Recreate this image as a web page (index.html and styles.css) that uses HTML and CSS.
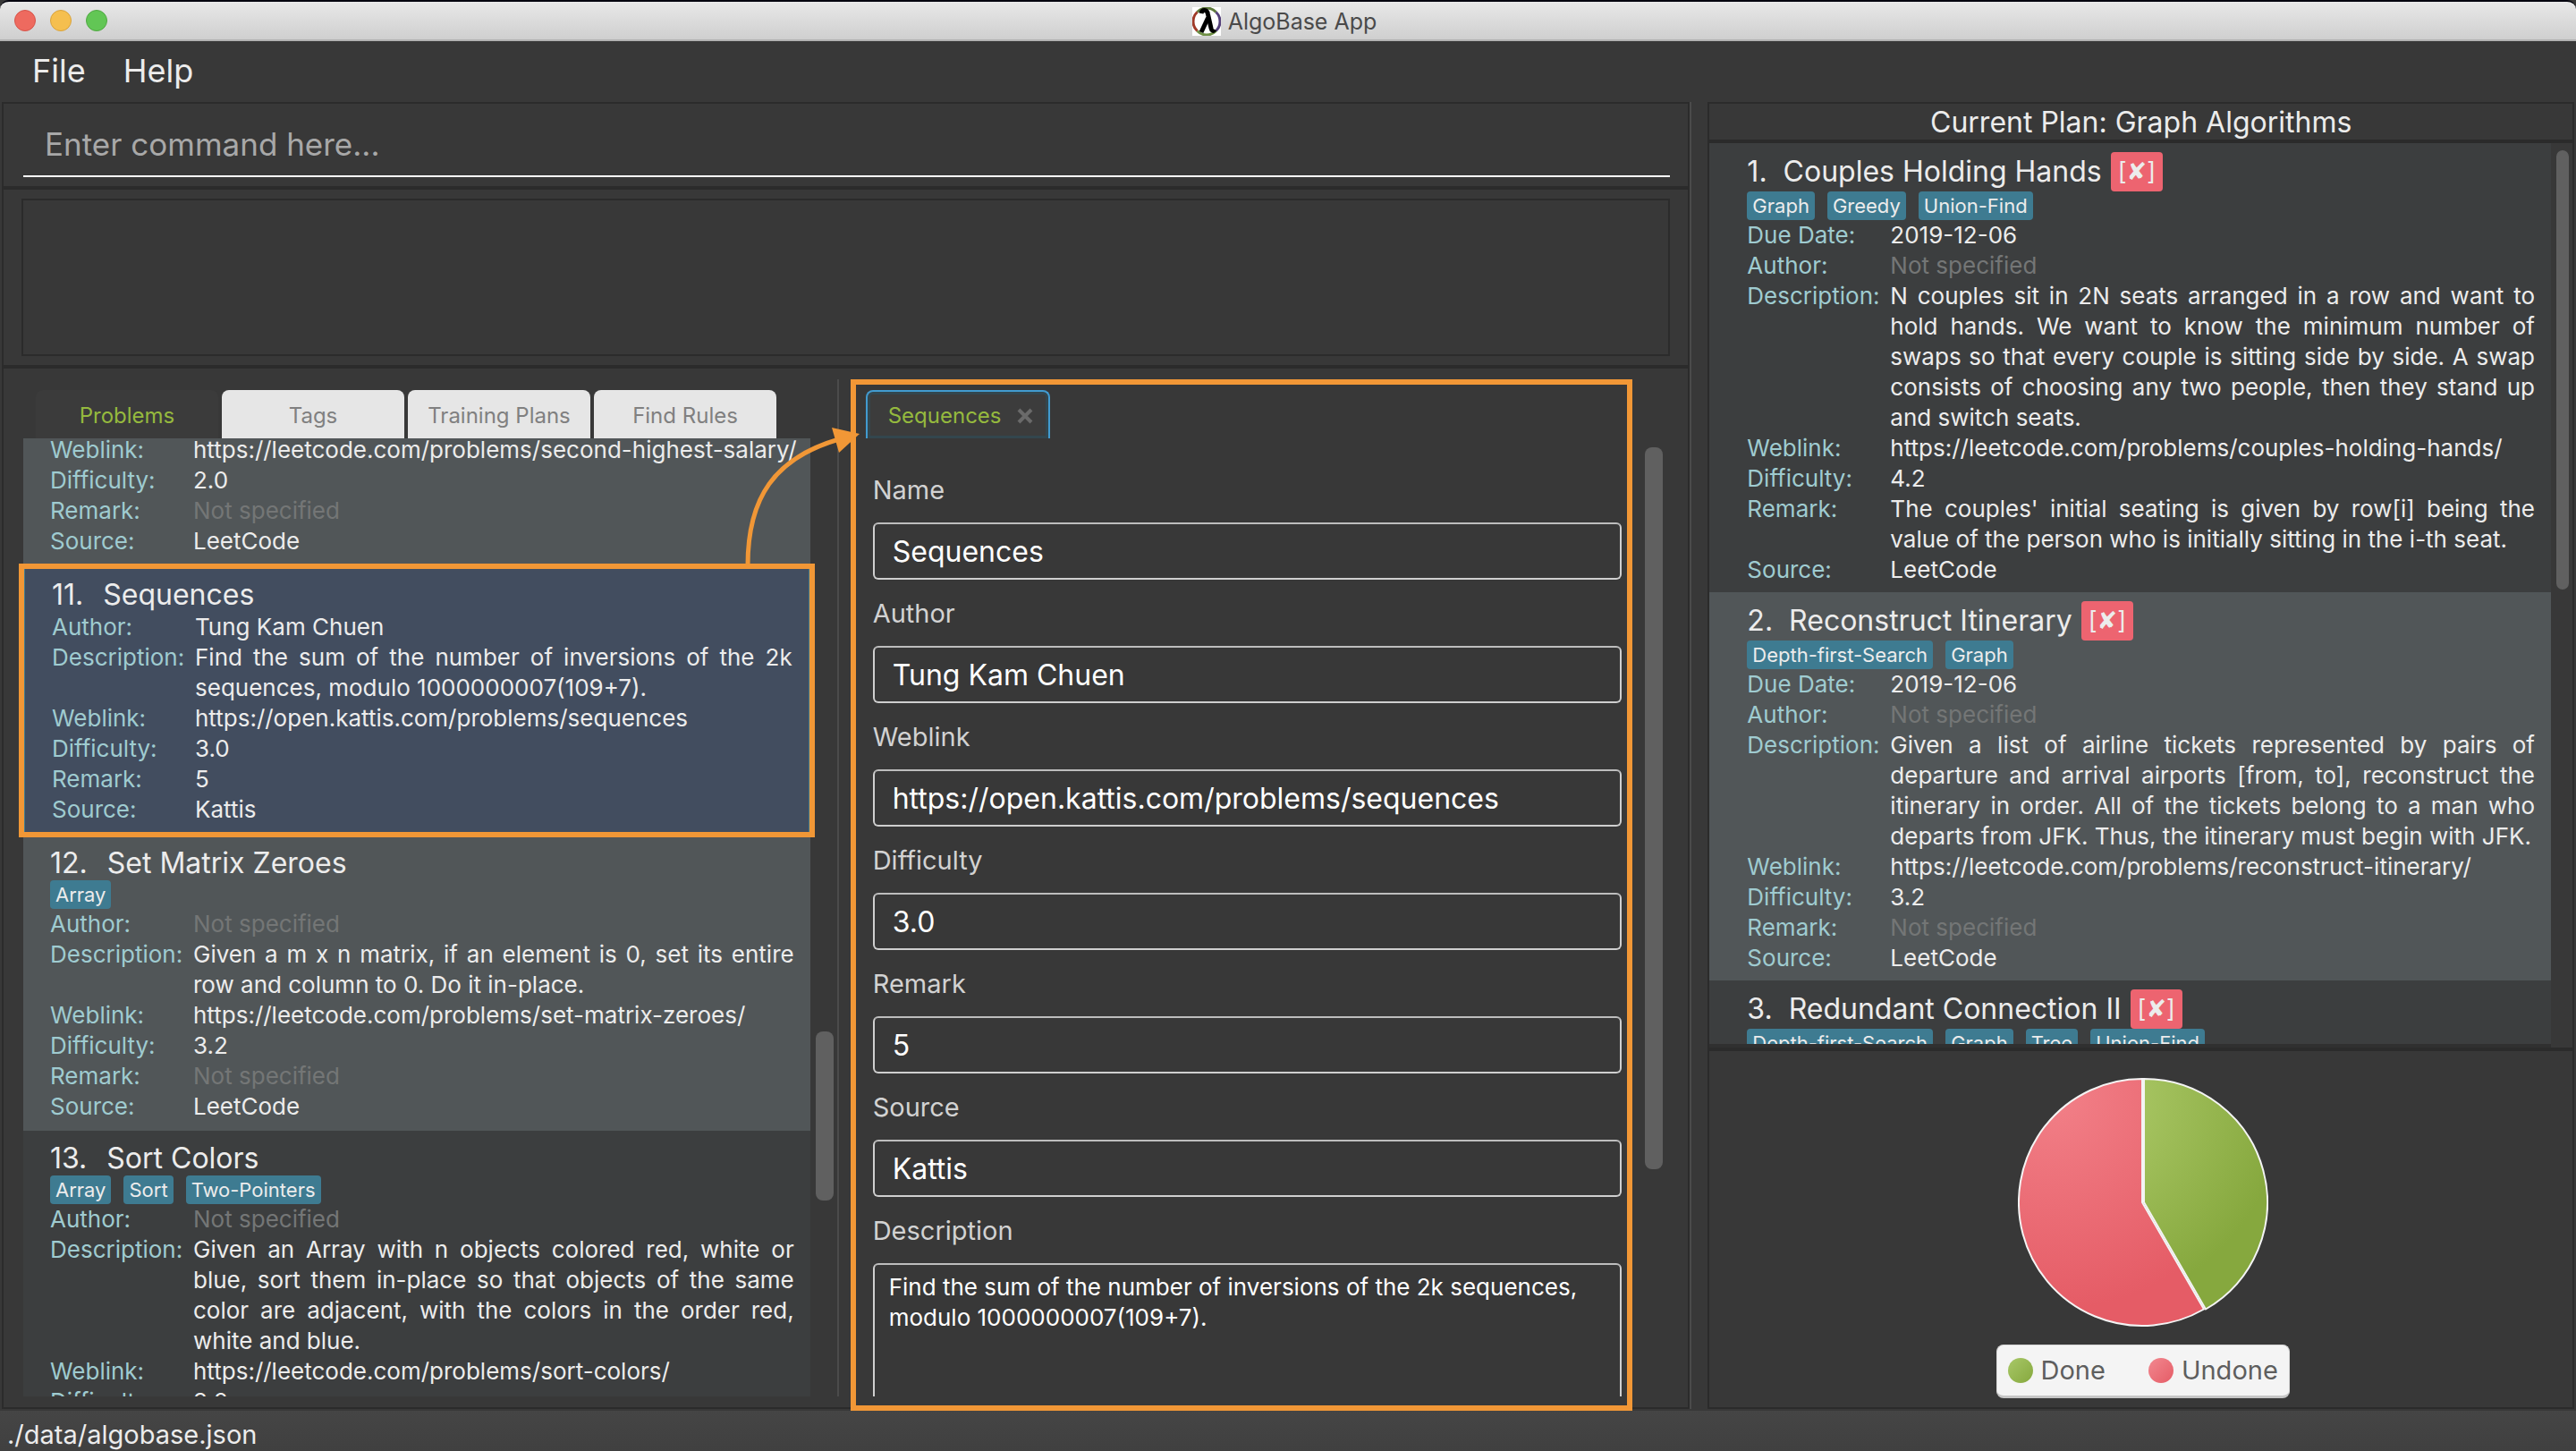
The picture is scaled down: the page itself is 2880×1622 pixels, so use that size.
FILE: index.html
```html
<!DOCTYPE html>
<html lang="en">
<head>
<meta charset="utf-8">
<title>AlgoBase App</title>
<link rel="stylesheet" href="styles.css">
</head>
<body>
<header class="titlebar">
  <div class="lights"><span class="light red"></span><span class="light amber"></span><span class="light green"></span></div>
  <h1 class="app-title">
    <svg class="app-logo" viewBox="0 0 32 32" aria-hidden="true">
      <rect width="32" height="32" fill="#fff"/>
      <g fill="none" stroke-width="3">
        <path d="M5.500 5.500A14.500 14.500 0 0 1 26.500 5.500" stroke="#5f7a3c"/>
        <path d="M26.500 5.500A14.500 14.500 0 0 1 26.500 26.500" stroke="#54407a"/>
        <path d="M26.500 26.500A14.500 14.500 0 0 1 5.500 26.500" stroke="#6f8f45"/>
        <path d="M5.500 26.500A14.500 14.500 0 0 1 5.500 5.500" stroke="#a03a28"/>
      </g>
      <path d="M10 7C11 2.500 16.500 2 17.500 8L21 23.500C21.500 26 23.500 27.500 25 25" fill="none" stroke="#000" stroke-width="5"/>
      <path d="M17.500 12L10 28" fill="none" stroke="#000" stroke-width="5"/>
    </svg>
    AlgoBase App
  </h1>
</header>

<nav class="menubar">
  <button class="menu" type="button">File</button>
  <button class="menu" type="button">Help</button>
</nav>

<main class="split">
  <div class="workspace">
    <section class="panel command">
      <input class="command-input" type="text" placeholder="Enter command here..." aria-label="Command">
    </section>
    <section class="panel result"><output class="result-box"></output></section>

    <section class="panel browser">
      <div class="pane problems">
        <div class="tabs" role="tablist">
          <button class="tab selected" type="button" role="tab">Problems</button>
          <button class="tab" type="button" role="tab">Tags</button>
          <button class="tab" type="button" role="tab">Training Plans</button>
          <button class="tab" type="button" role="tab">Find Rules</button>
        </div>
        <div class="scroll-area">
          <div class="list">
            <article class="item even cut">
              <dl class="facts">
                <dt>Weblink:</dt><dd class="url">https://leetcode.com/problems/second-highest-salary/</dd>
                <dt>Difficulty:</dt><dd>2.0</dd>
                <dt>Remark:</dt><dd class="none">Not specified</dd>
                <dt>Source:</dt><dd>LeetCode</dd>
              </dl>
            </article>
            <article class="item current">
              <h2 class="name"><span class="index">11.</span>Sequences</h2>
              <dl class="facts">
                <dt>Author:</dt><dd>Tung Kam Chuen</dd>
                <dt>Description:</dt><dd>Find the sum of the number of inversions of the 2k sequences, modulo 1000000007(109+7).</dd>
                <dt>Weblink:</dt><dd class="url">https://open.kattis.com/problems/sequences</dd>
                <dt>Difficulty:</dt><dd>3.0</dd>
                <dt>Remark:</dt><dd>5</dd>
                <dt>Source:</dt><dd>Kattis</dd>
              </dl>
            </article>
            <article class="item even">
              <h2 class="name"><span class="index">12.</span>Set Matrix Zeroes</h2>
              <div class="tags"><span class="tag">Array</span></div>
              <dl class="facts">
                <dt>Author:</dt><dd class="none">Not specified</dd>
                <dt>Description:</dt><dd>Given a m x n matrix, if an element is 0, set its entire row and column to 0. Do it in-place.</dd>
                <dt>Weblink:</dt><dd class="url">https://leetcode.com/problems/set-matrix-zeroes/</dd>
                <dt>Difficulty:</dt><dd>3.2</dd>
                <dt>Remark:</dt><dd class="none">Not specified</dd>
                <dt>Source:</dt><dd>LeetCode</dd>
              </dl>
            </article>
            <article class="item">
              <h2 class="name"><span class="index">13.</span>Sort Colors</h2>
              <div class="tags"><span class="tag">Array</span><span class="tag">Sort</span><span class="tag">Two-Pointers</span></div>
              <dl class="facts">
                <dt>Author:</dt><dd class="none">Not specified</dd>
                <dt>Description:</dt><dd>Given an Array with n objects colored red, white or blue, sort them in-place so that objects of the same color are adjacent, with the colors in the order red, white and blue.</dd>
                <dt>Weblink:</dt><dd class="url">https://leetcode.com/problems/sort-colors/</dd>
                <dt>Difficulty:</dt><dd>3.2</dd>
              </dl>
            </article>
          </div>
          <div class="scrollbar problems-bar"><span class="thumb"></span></div>
        </div>
      </div>

      <div class="divider"></div>

      <div class="pane detail">
        <div class="tabs" role="tablist">
          <div class="tab closable" role="tab">Sequences
            <button class="close" type="button" aria-label="Close tab">
              <svg viewBox="0 0 18 18"><path d="M2 2L16 16M16 2L2 16" fill="none" stroke="#6a6a6a" stroke-width="4"/></svg>
            </button>
          </div>
        </div>
        <div class="scroll-area">
          <form class="form">
            <label class="caption" for="f-name">Name</label>
            <input class="field" id="f-name" type="text" value="Sequences">
            <label class="caption" for="f-author">Author</label>
            <input class="field" id="f-author" type="text" value="Tung Kam Chuen">
            <label class="caption" for="f-link">Weblink</label>
            <input class="field" id="f-link" type="text" value="https://open.kattis.com/problems/sequences">
            <label class="caption" for="f-diff">Difficulty</label>
            <input class="field" id="f-diff" type="text" value="3.0">
            <label class="caption" for="f-remark">Remark</label>
            <input class="field" id="f-remark" type="text" value="5">
            <label class="caption" for="f-source">Source</label>
            <input class="field" id="f-source" type="text" value="Kattis">
            <label class="caption" for="f-desc">Description</label>
            <textarea class="field area" id="f-desc">Find the sum of the number of inversions of the 2k sequences, modulo 1000000007(109+7).</textarea>
          </form>
          <div class="scrollbar detail-bar"><span class="thumb"></span></div>
        </div>
        <svg class="arrow" viewBox="830 474 134 160" aria-hidden="true">
          <path d="M836 632C836 556 866 512 938 491" fill="none" stroke="#f19736" stroke-width="5"/>
          <path d="M930 478L961 485L938 506Z" fill="#f19736"/>
        </svg>
      </div>
    </section>
  </div>

  <div class="gutter"></div>

  <aside class="plan">
    <h2 class="panel plan-title">Current Plan: Graph Algorithms</h2>
    <section class="panel plan-list">
      <div class="list">
        <article class="item">
          <h3 class="name"><span class="index">1.</span>Couples Holding Hands<span class="state">[✘]</span></h3>
          <div class="tags"><span class="tag">Graph</span><span class="tag">Greedy</span><span class="tag">Union-Find</span></div>
          <dl class="facts">
            <dt>Due Date:</dt><dd>2019-12-06</dd>
            <dt>Author:</dt><dd class="none">Not specified</dd>
            <dt>Description:</dt><dd>N couples sit in 2N seats arranged in a row and want to hold hands. We want to know the minimum number of swaps so that every couple is sitting side by side. A swap consists of choosing any two people, then they stand up and switch seats.</dd>
            <dt>Weblink:</dt><dd class="url">https://leetcode.com/problems/couples-holding-hands/</dd>
            <dt>Difficulty:</dt><dd>4.2</dd>
            <dt>Remark:</dt><dd>The couples' initial seating is given by row[i] being the value of the person who is initially sitting in the i-th seat.</dd>
            <dt>Source:</dt><dd>LeetCode</dd>
          </dl>
        </article>
        <article class="item even">
          <h3 class="name"><span class="index">2.</span>Reconstruct Itinerary<span class="state">[✘]</span></h3>
          <div class="tags"><span class="tag">Depth-first-Search</span><span class="tag">Graph</span></div>
          <dl class="facts">
            <dt>Due Date:</dt><dd>2019-12-06</dd>
            <dt>Author:</dt><dd class="none">Not specified</dd>
            <dt>Description:</dt><dd>Given a list of airline tickets represented by pairs of departure and arrival airports [from, to], reconstruct the itinerary in order. All of the tickets belong to a man who departs from JFK. Thus, the itinerary must begin with JFK.</dd>
            <dt>Weblink:</dt><dd class="url">https://leetcode.com/problems/reconstruct-itinerary/</dd>
            <dt>Difficulty:</dt><dd>3.2</dd>
            <dt>Remark:</dt><dd class="none">Not specified</dd>
            <dt>Source:</dt><dd>LeetCode</dd>
          </dl>
        </article>
        <article class="item">
          <h3 class="name"><span class="index">3.</span>Redundant Connection II<span class="state">[✘]</span></h3>
          <div class="tags"><span class="tag">Depth-first-Search</span><span class="tag">Graph</span><span class="tag">Tree</span><span class="tag">Union-Find</span></div>
        </article>
      </div>
      <div class="scrollbar plan-bar"><span class="thumb"></span></div>
    </section>
    <section class="panel progress">
      <svg class="pie" viewBox="0 0 280 280" role="img" aria-label="Done and undone problems">
        <defs>
          <radialGradient id="done" gradientUnits="userSpaceOnUse" cx="60" cy="20" r="240">
            <stop offset="0" stop-color="#b4d070"/><stop offset="1" stop-color="#86a83e"/>
          </radialGradient>
          <radialGradient id="undone" gradientUnits="userSpaceOnUse" cx="40" cy="20" r="240">
            <stop offset="0" stop-color="#f28088"/><stop offset="1" stop-color="#e55c66"/>
          </radialGradient>
        </defs>
        <path d="M141 140V2A138 138 0 0 1 210 259.500Z" fill="url(#done)" stroke="#f4f4f4" stroke-width="2"/>
        <path d="M139 140V2A138 138 0 1 0 208 259.500Z" fill="url(#undone)" stroke="#f4f4f4" stroke-width="2"/>
      </svg>
      <ul class="legend">
        <li class="key"><span class="dot done"></span>Done</li>
        <li class="key"><span class="dot undone"></span>Undone</li>
      </ul>
    </section>
  </aside>
</main>

<footer class="status">./data/algobase.json</footer>
</body>
</html>
```
FILE: styles.css
```css
* { box-sizing: border-box; }

:root {
  --bg: #383838;
  --edge: #2b2b2b;
  --text: #ececec;
  --label: #9fcbd0;
  --accent: #f19736;
}

html, body { height: 100%; }

body {
  margin: 0;
  display: flex;
  flex-direction: column;
  overflow: hidden;
  background: var(--bg);
  color: var(--text);
  font-family: Inter, "Liberation Sans", sans-serif;
  font-size: 26px;
  line-height: 34px;
}

h1, h2, h3, dl, dd, ul { margin: 0; padding: 0; font-weight: 400; }
button, input, textarea { font: inherit; color: inherit; }
button { border: 0; background: none; padding: 0; }

/* window frame */
.titlebar {
  display: grid;
  grid-template-columns: 1fr auto 1fr;
  align-items: center;
  flex: none;
  height: 46px;
  padding: 0 16px;
  border-top: 2px solid #05050f;
  border-bottom: 2px solid #b2b2b2;
  border-radius: 10px 10px 0 0;
  background: linear-gradient(#e8e8e8, #cfcfcf);
}
.lights { display: flex; gap: 16px; }
.light { width: 24px; height: 24px; border-radius: 50%; }
.red { background: #ee6a5f; border: 1px solid #d6544a; }
.amber { background: #f5bf4f; border: 1px solid #d9a33c; }
.green { background: #62c655; border: 1px solid #50a843; }
.app-title { display: flex; align-items: center; gap: 8px; padding: 2px 8px 0 0; font-size: 25px; line-height: 32px; color: #4a4a4a; }
.app-logo { width: 32px; height: 32px; }

.menubar { display: flex; flex: none; gap: 42px; height: 68px; padding: 0 36px 2px; }
.menu { font-size: 36px; }

.status {
  flex: none;
  height: 45px;
  padding: 7px 8px 0;
  background: linear-gradient(#454545, #404040);
  font-size: 29px;
  line-height: 40px;
}

/* main areas */
.split { display: flex; flex: 1; min-height: 0; padding-bottom: 2px; }
.workspace { display: flex; flex-direction: column; flex: 1890 1 0; min-width: 0; padding-left: 2px; }
.gutter { flex: none; width: 20px; border-left: 2px solid #4b4b4b; }
.plan { display: flex; flex-direction: column; flex: 970 1 0; min-width: 0; padding-right: 2px; }
.panel { border: 2px solid var(--edge); }

.command { flex: none; padding: 10px 20px 10px 22px; }
.command-input {
  display: block;
  width: 100%;
  height: 72px;
  padding: 0 24px;
  border: 0;
  border-bottom: 2px solid #fff;
  background: none;
  font-size: 35px;
  outline: 0;
}
.command-input::placeholder { color: #a8a8a8; opacity: 1; }
.result { flex: none; padding: 10px 20px; }
.result-box { display: block; height: 176px; border: 2px solid var(--edge); }

.browser { display: flex; flex: 1; min-height: 0; padding: 12px 0; }
.pane { display: flex; flex-direction: column; min-width: 0; }
.problems { flex: 932 1 0; }
.detail { flex: 950 1 0; position: relative; }
.divider { flex: none; width: 2px; background: #4b4b4b; }

.tabs { display: flex; flex: none; gap: 4px; padding: 12px 36px 0; }
.detail .tabs { padding-left: 30px; }
.tab {
  width: 204px;
  height: 54px;
  padding-top: 4px;
  border-radius: 8px 8px 0 0;
  background: #e6e6e6;
  color: #808080;
  font-size: 24px;
  text-align: center;
}
.tab.selected { background: #3b3b3b; color: #95b93e; }
.tab.closable {
  display: flex;
  align-items: center;
  justify-content: space-between;
  width: 206px;
  padding: 2px 17px 0 23px;
  border: 2px solid #419bd0;
  border-bottom: 0;
  background: #3c3c3c;
  box-shadow: inset 0 0 0 3px #33464e;
  color: #95b93e;
}
.close { display: flex; }
.close svg { width: 18px; height: 18px; }

.scroll-area { display: flex; flex: 1; min-height: 0; }
.problems .scroll-area { gap: 6px; padding: 0 4px 0 22px; }
.detail .scroll-area { gap: 26px; padding: 0 28px 0 38px; }
.scrollbar { display: grid; flex: none; width: 20px; }
.thumb { grid-row: 2; border-radius: 8px; background: #606060; }
.problems-bar { grid-template-rows: 663fr 189fr 219fr; }
.detail-bar { grid-template-rows: 10fr 807fr 254fr; }
.plan-bar { width: 14px; grid-template-rows: 8fr 491fr 511fr; }

/* problem lists */
.list { flex: 1; min-width: 0; overflow-y: clip; }
.item { padding: 12px 18px 10px 30px; background: #3c3e3f; }
.item.even { background: #515658; }
.item.cut { margin-top: -4px; padding-top: 0; }
.item.current { position: relative; border: 2px solid #3e7b91; background: #424d5f; }
.item.current::after {
  content: "";
  position: absolute;
  inset: -4px -7px;
  border: 6px solid var(--accent);
}
.name { display: flex; align-items: center; font-size: 32px; line-height: 38px; }
.index { margin-right: 22px; }
.tags { display: flex; gap: 14px; }
.tag {
  height: 32px;
  padding: 0 6px;
  border-radius: 4px;
  background: #3e7b91;
  font-size: 22px;
  line-height: 32px;
}
.facts { display: grid; grid-template-columns: 160px 1fr; }
.facts dt { color: var(--label); }
.facts dd { min-width: 0; text-align: justify; }
.facts .url { white-space: nowrap; }
.facts .none { color: #747676; }

/* edit form */
.form { flex: 1; min-width: 0; overflow: hidden; padding-top: 37px; }
.caption { display: block; margin-bottom: 15px; color: #d2d2d2; font-size: 29px; line-height: 42px; }
.field {
  display: block;
  width: 100%;
  height: 64px;
  margin-bottom: 17px;
  padding: 0 20px;
  border: 2px solid #cfcfcf;
  border-top-color: #bdbdbd;
  border-radius: 6px;
  background: none;
  color: #fff;
  font-size: 32px;
  outline: 0;
}
.area { height: 300px; padding: 8px 16px; font-size: 26px; line-height: 34px; resize: none; }

/* callouts */
.detail::after {
  content: "";
  position: absolute;
  inset: 0 62px -16px 13px;
  border: 6px solid var(--accent);
  pointer-events: none;
}
.arrow { position: absolute; left: -108px; top: 50px; width: 134px; height: 160px; z-index: 1; pointer-events: none; }

/* training plan */
.plan-title { flex: none; padding-top: 2px; font-size: 32px; line-height: 38px; text-align: center; }
.plan-list { display: flex; flex: 1; min-height: 0; gap: 6px; padding-right: 4px; }
.plan-list .list { border-bottom: 4px solid #303030; }
.plan-list .item { padding: 10px 18px 8px 42px; }
.plan-list .name { line-height: 44px; }
.plan-list .index { margin-right: 18px; }
.state {
  margin-left: 10px;
  padding: 0 8px;
  border-radius: 4px;
  background: #ed6470;
  font-family: Inter, "DejaVu Sans", sans-serif;
  font-size: 27px;
}
.progress { display: flex; flex: none; flex-direction: column; align-items: center; gap: 19px; padding: 29px 0 10px 4px; }
.pie { width: 280px; height: 280px; }
.legend {
  display: flex;
  gap: 48px;
  padding: 0 12px;
  border: 1px solid #d8d8d8;
  border-bottom: 3px solid #c6c6c6;
  border-radius: 8px;
  background: #f4f4f4;
  color: #5e5e5e;
  font-size: 29px;
  line-height: 56px;
  list-style: none;
}
.key { display: flex; align-items: center; gap: 9px; }
.dot { width: 28px; height: 28px; border-radius: 50%; }
.dot.done { background: linear-gradient(135deg, #a8c868, #86a83e); }
.dot.undone { background: linear-gradient(135deg, #f28890, #e55c66); }
```
